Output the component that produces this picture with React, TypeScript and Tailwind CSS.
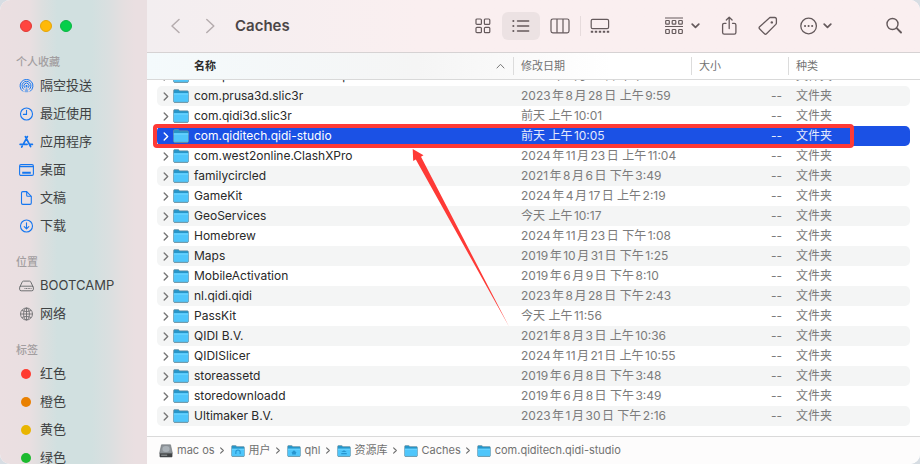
import { useState } from "react";

const dotColors = [
  "bg-[#ff453f] border-[#e03a35]",
  "bg-[#ffb907] border-[#e5a50a]",
  "bg-[#05cf4a] border-[#0cb544]",
];

const AirDropIcon = () => (
  <svg width="15" height="14" viewBox="0 0 15 14" fill="none" stroke="currentColor" strokeWidth="1" strokeLinecap="round">
    <path d="M3.800 12.300a6.500 6.500 0 1 1 7.400 0" />
    <path d="M4.600 10.300a4.500 4.500 0 1 1 5.800 0" />
    <path d="M5.700 8.600a2.600 2.600 0 1 1 3.600 0" />
    <path d="M7.500 7.500 9.600 13a6.500 6.500 0 0 1-4.200 0Z" fill="currentColor" stroke="none" opacity="0.5" />
    <circle cx="7.500" cy="7" r="1.100" fill="currentColor" stroke="none" />
  </svg>
);

const ClockIcon = () => (
  <svg width="15" height="14" viewBox="0 0 15 14" fill="none" stroke="currentColor" strokeWidth="1.1" strokeLinecap="round">
    <circle cx="7.5" cy="7" r="6" />
    <path d="M7.5 3.2V7.4H4.4" />
  </svg>
);

const AppsIcon = () => (
  <svg width="15" height="14" viewBox="0 0 15 14" fill="none" stroke="currentColor" strokeWidth="1.7" strokeLinecap="round">
    <path d="M8.400 1.600 4.600 8.600M6.400 1.600 11.600 11.600M1.100 9.300h7M11.200 9.300h2.200M3.200 11.200l-.5.8" />
  </svg>
);

const DesktopIcon = () => (
  <svg width="15" height="14" viewBox="0 0 15 14" fill="none" stroke="currentColor" strokeWidth="1.1">
    <rect x="0.6" y="1.6" width="13.8" height="10.8" rx="1.4" />
    <path d="M0.600 3.600h13.800" />
    <path d="M3.200 9.800h8.600" strokeWidth="2" />
  </svg>
);

const DocIcon = () => (
  <svg width="15" height="14" viewBox="0 0 15 14" fill="none" stroke="currentColor" strokeWidth="1.1" strokeLinejoin="round">
    <path d="M3.8.6h3.9l4.6 4.7v6.8c0 .8-.5 1.3-1.3 1.3H3.800c-.8 0-1.300-.5-1.300-1.300V1.900c0-.8.5-1.300 1.300-1.300Z" />
    <path d="M7.700.8v3.400c0 .8.300 1.100 1.100 1.100h3.400" />
  </svg>
);

const DownloadIcon = () => (
  <svg width="15" height="14" viewBox="0 0 15 14" fill="none" stroke="currentColor" strokeWidth="1.1" strokeLinecap="round" strokeLinejoin="round">
    <circle cx="7.5" cy="7" r="6" />
    <path d="M7.500 3.800v6M5.200 7.700l2.300 2.200 2.300-2.200" />
  </svg>
);

const DriveIcon = () => (
  <svg width="15" height="14" viewBox="0 0 15 14" fill="none" stroke="currentColor" strokeWidth="1" strokeLinejoin="round">
    <path d="M.7 8.300 3.300 2.800c.2-.5.600-.7 1.100-.7h6.200c.5 0 .9.200 1.100.7l2.600 5.500" />
    <rect x="0.6" y="7.2" width="13.8" height="4.6" rx="1.6" />
    <path d="M5.500 9.500h7" strokeDasharray="1 .6" />
  </svg>
);

const GlobeIcon = () => (
  <svg width="15" height="14" viewBox="0 0 15 14" fill="none" stroke="currentColor" strokeWidth="0.9">
    <circle cx="7.5" cy="7" r="6" />
    <ellipse cx="7.5" cy="7" rx="2.9" ry="6" />
    <path d="M7.500 1v12M1.500 7h12M2.800 3.400c2.800 1.500 6.600 1.500 9.400 0M2.800 10.600c2.800-1.500 6.600-1.500 9.400 0" />
  </svg>
);

const favorites = [
  { label: "隔空投送", Icon: AirDropIcon },
  { label: "最近使用", Icon: ClockIcon },
  { label: "应用程序", Icon: AppsIcon },
  { label: "桌面", Icon: DesktopIcon },
  { label: "文稿", Icon: DocIcon },
  { label: "下载", Icon: DownloadIcon },
];

const locations = [
  { label: "BOOTCAMP", Icon: DriveIcon },
  { label: "网络", Icon: GlobeIcon },
];

const tags = [
  { label: "红色", color: "bg-[#ff3b30]" },
  { label: "橙色", color: "bg-[#e98000]" },
  { label: "黄色", color: "bg-[#e9b500]" },
  { label: "绿色", color: "bg-[#1dba2f]" },
];

const folders = [
  { name: "com.plausiblelabs.crashreporter.data", date: "2023年8月28日 下午2:43" },
  { name: "com.prusa3d.slic3r", date: "2023年8月28日 上午9:59" },
  { name: "com.qidi3d.slic3r", date: "前天 上午10:01" },
  { name: "com.qiditech.qidi-studio", date: "前天 上午10:05" },
  { name: "com.west2online.ClashXPro", date: "2024年11月23日 上午11:04" },
  { name: "familycircled", date: "2021年8月6日 下午3:49" },
  { name: "GameKit", date: "2024年4月17日 上午2:19" },
  { name: "GeoServices", date: "今天 上午10:17" },
  { name: "Homebrew", date: "2024年11月23日 下午1:08" },
  { name: "Maps", date: "2019年10月31日 下午1:25" },
  { name: "MobileActivation", date: "2019年6月9日 下午8:10" },
  { name: "nl.qidi.qidi", date: "2023年8月28日 下午2:43" },
  { name: "PassKit", date: "今天 上午11:56" },
  { name: "QIDI B.V.", date: "2021年8月3日 上午10:36" },
  { name: "QIDISlicer", date: "2024年11月21日 上午10:55" },
  { name: "storeassetd", date: "2019年6月8日 下午3:48" },
  { name: "storedownloadd", date: "2019年6月8日 下午3:49" },
  { name: "Ultimaker B.V.", date: "2023年1月30日 下午2:16" },
];

const path = [
  { label: "mac os", kind: "disk" },
  { label: "用户", kind: "users" },
  { label: "qhl", kind: "home" },
  { label: "资源库", kind: "library" },
  { label: "Caches", kind: "folder" },
  { label: "com.qiditech.qidi-studio", kind: "folder" },
];

const Folder = ({ kind = "folder", className }: { kind?: string; className?: string }) => (
  <svg className={className} viewBox="0 0 16 14" fill="none">
    <path d="M.5 2c0-.9.500-1.400 1.400-1.400h3.500l1.300 1.200h7.400c.9 0 1.400.5 1.400 1.400v9c0 .7-.4 1.200-1.200 1.200H1.700c-.8 0-1.200-.5-1.200-1.200Z" fill="#2796c9" stroke="#7b8f98" strokeWidth="0.6" />
    <path d="M.8 4.300h14.400v7.900c0 .6-.3.900-.9.900H1.700c-.6 0-.9-.3-.9-.9Z" fill="#4fc6fb" />
    <path d="M.8 4.300h14.400v1.500H.8Z" fill="#68d2ff" />
    <path d="M1 13.300h14" stroke="#6c8f9f" strokeWidth="0.7" />
    {kind === "users" && <path d="M5.500 10.500V8.300a2.500 2.500 0 0 1 5 0v2.200" stroke="#2795cf" strokeWidth="1.300" />}
    {kind === "home" && <path d="M8 6.200 4.800 9h1v2.200h4.400V9h1Z" fill="#2795cf" />}
    {kind === "library" && <path d="M8 6 4.800 8.200h6.400ZM4.800 9.300h6.400v1.500H4.800Z" fill="#2795cf" />}
  </svg>
);

const Disk = ({ className }: { className?: string }) => (
  <svg className={className} viewBox="0 0 14 14" fill="none">
    <path d="M2.500.8h9l1.900 8.500H.6Z" fill="#8e9499" stroke="#6a6e72" strokeWidth="0.6" />
    <ellipse cx="7" cy="5" rx="3.600" ry="3" fill="#aab1b7" />
    <path d="M.6 9.200h12.800v3c0 .6-.4 1-1 1H1.600c-.6 0-1-.4-1-1Z" fill="#414447" />
    <path d="M2.200 11.200h6" stroke="#a5a8aa" strokeWidth="0.9" />
  </svg>
);

const ChevronRight = ({ className }: { className?: string }) => (
  <svg className={className} width="6" height="9" viewBox="0 0 6 9" fill="none" stroke="currentColor" strokeWidth="1.400" strokeLinecap="round" strokeLinejoin="round">
    <path d="M1.200 1l3.500 3.500L1.200 8" />
  </svg>
);

const ChevronDown = () => (
  <svg width="9" height="6" viewBox="0 0 9 6" fill="none" stroke="currentColor" strokeWidth="1.700" strokeLinecap="round" strokeLinejoin="round">
    <path d="M1.200 1.200l3.300 3.200 3.300-3.200" />
  </svg>
);

const ViewSwitch = () => {
  const [view, setView] = useState("list");

  const views = [
    {
      id: "icons",
      label: "图标",
      icon: (
        <svg width="16" height="16" viewBox="0 0 16 16" fill="none" stroke="currentColor" strokeWidth="1.200">
          <rect x="1" y="1" width="5.400" height="5.400" rx="1" />
          <rect x="9.400" y="1" width="5.400" height="5.400" rx="1" />
          <rect x="1" y="9.300" width="5.400" height="5.400" rx="1" />
          <rect x="9.400" y="9.300" width="5.400" height="5.400" rx="1" />
        </svg>
      ),
    },
    {
      id: "list",
      label: "列表",
      icon: (
        <svg width="18" height="14" viewBox="0 0 18 14" fill="none" stroke="currentColor" strokeWidth="1.400" strokeLinecap="round">
          <path d="M5.500 2h11.200M5.500 7h11.200M5.500 12h11.200" />
          <path d="M1.300 2h.1M1.300 7h.1M1.300 12h.1" strokeWidth="2" />
        </svg>
      ),
    },
    {
      id: "columns",
      label: "分栏",
      icon: (
        <svg width="20" height="16" viewBox="0 0 20 16" fill="none" stroke="currentColor" strokeWidth="1.200">
          <rect x="1" y="1" width="18" height="13.800" rx="1.800" />
          <path d="M7 1v13.800M13 1v13.800" />
        </svg>
      ),
    },
    {
      id: "gallery",
      label: "画廊",
      icon: (
        <svg width="20" height="16" viewBox="0 0 20 16" fill="none" stroke="currentColor" strokeWidth="1.200">
          <rect x="1.200" y="1.400" width="17.400" height="9.200" rx="1.400" />
          <path d="M.8 13.800h18.600" strokeWidth="2" strokeDasharray="2.400 1.600" />
        </svg>
      ),
    },
  ];

  return (
    <div className="flex items-center">
      {views.map(({ id, label, icon }) => (
        <div key={id} className="flex items-center">
          {id === "gallery" && <span className="h-5 w-px bg-[#e6dbdc]" />}
          <button
            type="button"
            aria-label={label}
            aria-pressed={view === id}
            onClick={() => setView(id)}
            className={`flex h-7 items-center justify-center rounded-md ${
              id === "columns" ? "w-10" : "w-[38px]"
            } ${view === id ? "bg-[#ece2e3]" : ""}`}
          >
            {icon}
          </button>
        </div>
      ))}
    </div>
  );
};

const Toolbar = () => (
  <header className="flex h-[53px] shrink-0 items-center border-b border-[#d6d2d3] bg-linear-to-r from-[#f3eef0] via-[#faeff0] via-35% to-[#faeff0] pr-[18px] pl-[22px] text-[#655a5c]">
    <div className="flex items-center gap-6 text-[#b5acae]">
      <button type="button" aria-label="返回">
        <svg width="11" height="16" viewBox="0 0 11 16" fill="none" stroke="currentColor" strokeWidth="1.500" strokeLinecap="round" strokeLinejoin="round">
          <path d="M10 1.500 3 8l7 6.500" />
        </svg>
      </button>
      <button type="button" aria-label="前进">
        <svg width="11" height="16" viewBox="0 0 11 16" fill="none" stroke="currentColor" strokeWidth="1.500" strokeLinecap="round" strokeLinejoin="round">
          <path d="M2.800 1.500 9.800 8l-7 6.500" />
        </svg>
      </button>
    </div>
    <h1 className="ml-5 text-[15px] font-semibold text-[#4b4647]">Caches</h1>
    <div className="ml-auto flex items-center">
      <ViewSwitch />
      <div className="ml-[46px] flex items-center gap-5">
        <button type="button" aria-label="分组" className="flex items-center gap-2">
          <svg width="18" height="18" viewBox="0 0 18 18" fill="none" stroke="currentColor" strokeWidth="1.200">
            <path d="M0 1h18M0 9.500h18" />
            <rect x="0.700" y="3.500" width="3.600" height="3.600" rx="0.700" />
            <rect x="7.200" y="3.500" width="3.600" height="3.600" rx="0.700" />
            <rect x="13.700" y="3.500" width="3.600" height="3.600" rx="0.700" />
            <rect x="0.700" y="12.500" width="3.600" height="4" rx="0.700" />
            <rect x="7.200" y="12.500" width="3.600" height="4" rx="0.700" />
            <rect x="13.700" y="12.500" width="3.600" height="4" rx="0.700" />
          </svg>
          <ChevronDown />
        </button>
        <button type="button" aria-label="共享">
          <svg width="18" height="20" viewBox="0 0 18 20" fill="none" stroke="currentColor" strokeWidth="1.300" strokeLinecap="round" strokeLinejoin="round">
            <path d="M6 7.300H4.200c-1 0-1.600.6-1.600 1.600v7.600c0 1 .6 1.600 1.600 1.600h10.100c1 0 1.600-.6 1.600-1.600V8.900c0-1-.6-1.600-1.600-1.600h-1.800" />
            <path d="M9.200 12.500V1.300M6.300 4l2.900-2.800L12.100 4" />
          </svg>
        </button>
        <button type="button" aria-label="标签">
          <svg width="22" height="20" viewBox="0 0 22 20" fill="none" stroke="currentColor" strokeWidth="1.300" strokeLinejoin="round">
            <path d="M11.900 1.500 1.600 10.800c-.7.700-.7 1.300-.1 2l5 5c.6.600 1.300.6 2-.1L17.800 8.400c.4-.5.600-.9.600-1.500V3.200c0-1-.6-1.700-1.600-1.700Z" />
            <circle cx="13.800" cy="6.400" r="1.200" fill="currentColor" stroke="none" />
          </svg>
        </button>
        <button type="button" aria-label="更多" className="flex items-center gap-[5px]">
          <svg width="18" height="18" viewBox="0 0 18 18" fill="none" stroke="currentColor" strokeWidth="1.300">
            <circle cx="8.600" cy="9" r="7.800" />
            <path d="M5 9h.1M8.550 9h.1M12.100 9h.1" strokeWidth="2" strokeLinecap="round" />
          </svg>
          <ChevronDown />
        </button>
      </div>
      <button type="button" aria-label="搜索" className="ml-[54px]">
        <svg width="16" height="18" viewBox="0 0 16 18" fill="none" stroke="currentColor" strokeLinecap="round">
          <circle cx="6.500" cy="7" r="5.500" strokeWidth="1.400" />
          <path d="M10.700 11.200 15 15.500" strokeWidth="1.900" />
        </svg>
      </button>
    </div>
  </header>
);

const SectionTitle = ({ children }: { children: string }) => (
  <h2 className="h-5 text-[11px] leading-5 font-medium text-[#a29ea0]">{children}</h2>
);

const itemClass = "flex h-7 w-full items-center gap-[6px] pl-[3px] text-[13px] text-[#3f4243]";

const Sidebar = () => (
  <aside className="flex w-[147px] shrink-0 flex-col overflow-hidden bg-[linear-gradient(to_right,#ebdfe1_0%,#e9dfe1_20%,#dcdfdf_29%,#d1e0e0_39%,#d1e0e0_62%,#dadfe0_74%,#e5dfe0_84%,#eadfe1_92%)] pl-4">
    <div className="flex h-[52px] shrink-0 items-center gap-2 pl-1">
      {dotColors.map((color) => (
        <span key={color} className={`size-3 rounded-full border ${color}`} />
      ))}
    </div>
    <nav className="flex flex-col gap-3">
      <section>
        <SectionTitle>个人收藏</SectionTitle>
        {favorites.map(({ label, Icon }) => (
          <button key={label} type="button" className={itemClass}>
            <span className="text-[#1677f0]">
              <Icon />
            </span>
            {label}
          </button>
        ))}
      </section>
      <section>
        <SectionTitle>位置</SectionTitle>
        {locations.map(({ label, Icon }) => (
          <button key={label} type="button" className={itemClass}>
            <span className="text-[#6f7173]">
              <Icon />
            </span>
            {label}
          </button>
        ))}
      </section>
      <section>
        <SectionTitle>标签</SectionTitle>
        {tags.map(({ label, color }) => (
          <button key={label} type="button" className={itemClass}>
            <span className="w-[15px] pl-[2px]">
              <span className={`block size-[10px] rounded-full ${color}`} />
            </span>
            {label}
          </button>
        ))}
      </section>
    </nav>
  </aside>
);

const Callout = () => (
  <>
    <span className="pointer-events-none absolute -top-[2px] right-14 -bottom-[2px] -left-1 z-10 rounded-[4px] border-4 border-[#fe3a36]" />
    <svg className="pointer-events-none absolute top-[22px] left-[254px] z-10" width="100" height="180" viewBox="0 0 100 180">
      <path d="M1.700 1 2.200 13l2.600-1.500L98 178.500 10 8.800l2.500-1.600Z" fill="#fe3a36" />
    </svg>
  </>
);

const columns = "grid grid-cols-[1fr_178px_97px_122px]";

const FileTable = () => {
  const [selected, setSelected] = useState("com.qiditech.qidi-studio");

  return (
    <table className="flex min-h-0 flex-1 flex-col text-xs">
      <thead className="block shrink-0 border-b border-[#d9d9d9] bg-linear-to-r from-[#f4fafc] via-[#f5f5f5] via-35% to-white to-60% text-[11px] text-[#727272]">
        <tr className={`${columns} h-[26px] items-center px-[10px] text-left`}>
          <th className="flex items-center justify-between pr-2 pl-[37px] font-semibold text-[#2b2b2b]">
            名称
            <svg width="9" height="6" viewBox="0 0 9 6" fill="none" stroke="#777" strokeLinecap="round">
              <path d="M1 5l3.500-3.700L8 5" />
            </svg>
          </th>
          <th className="border-l border-[#dcdcdc] pl-[7px] leading-[18px] font-normal">修改日期</th>
          <th className="border-l border-[#dcdcdc] pl-[7px] leading-[18px] font-normal">大小</th>
          <th className="border-l border-[#dcdcdc] pl-[7px] leading-[18px] font-normal">种类</th>
        </tr>
      </thead>
      <tbody className="flex min-h-0 flex-1 flex-col justify-end overflow-hidden px-[10px] pb-[10px]">
        {folders.map(({ name, date }, index) => {
          const active = name === selected;
          return (
            <tr
              key={name}
              onClick={() => setSelected(name)}
              className={`relative h-5 shrink-0 items-center rounded-[5px] ${columns} ${
                active
                  ? "bg-[#1b51e5] text-[#e4eafc]"
                  : index % 2
                    ? "bg-[#f4f5f5] text-[#7b7b7b]"
                    : "text-[#7b7b7b]"
              }`}
            >
              <td className={`flex items-center pl-[6px] ${active ? "text-white" : "text-[#292929]"}`}>
                <ChevronRight className={active ? "text-white" : "text-[#777]"} />
                <Folder className="mr-[5px] ml-1 h-[14px] w-4" />
                {name}
                {name === "com.qiditech.qidi-studio" && <Callout />}
              </td>
              <td className="pl-2 [text-autospace:normal]">{date}</td>
              <td className="pr-[6px] text-right">--</td>
              <td className="pl-2">文件夹</td>
            </tr>
          );
        })}
      </tbody>
    </table>
  );
};

const PathBar = () => (
  <footer className="flex h-7 shrink-0 items-center gap-[6px] border-t border-[#dadada] bg-[#fdfcfc] pl-3 text-[11px] text-[#717171]">
    {path.map(({ label, kind }, index) => (
      <div key={label} className="flex items-center gap-1">
        {kind === "disk" ? <Disk className="size-[14px]" /> : <Folder kind={kind} className="h-3 w-[14px]" />}
        <span>{label}</span>
        {index < path.length - 1 && <ChevronRight className="h-[7px] text-[#6b6b6b]" />}
      </div>
    ))}
  </footer>
);

const App = () => {
  return (
    <div className="h-screen bg-[#d7dde3] font-[Inter,'Noto_Sans_CJK_SC',sans-serif]">
      <div className="flex h-full overflow-hidden rounded-[10px] bg-white">
        <Sidebar />
        <main className="flex min-w-0 flex-1 flex-col">
          <Toolbar />
          <FileTable />
          <PathBar />
        </main>
      </div>
    </div>
  );
};

export default App;
